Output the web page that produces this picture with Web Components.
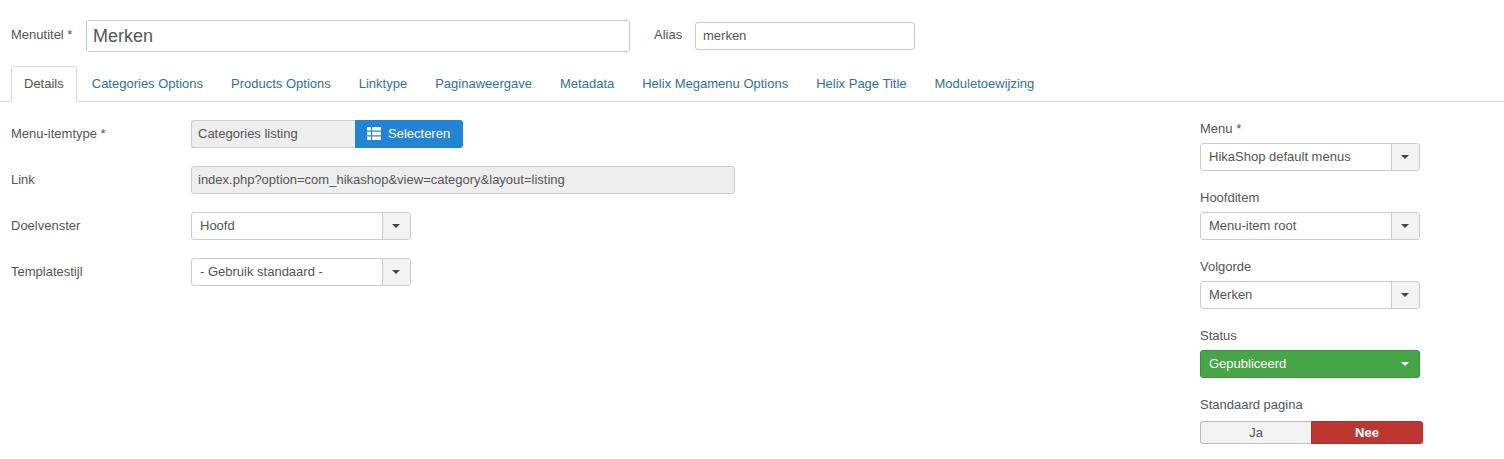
<!DOCTYPE html>
<html lang="nl">
<head>
<meta charset="utf-8">
<title>Merken</title>
<style>
html,body{margin:0;background:#fff;}
body{font:13px/18px "Liberation Sans",Arial,sans-serif;color:#555;}
</style>
</head>
<body>
<menu-form></menu-form>

<script>
class TextVeld extends HTMLElement{
    constructor(){
        super()
        this.attachShadow({ mode: "open" })
        this.shadowRoot.innerHTML = `
            <style>
                :host{display:block;box-sizing:border-box;height:28px;padding:0 7px;border:1px solid #ccc;border-radius:3px;
                    background:#fff;color:#555;font-size:13px;line-height:25px;white-space:nowrap;overflow:hidden;}
                :host([groot]){height:32px;padding:0 6px;font-size:18px;line-height:30px;}
                :host([uit]){background:#eee;padding:0 6px;}
            </style>
            <slot></slot>
        `
    }
}
customElements.define("text-veld", TextVeld)

class KeuzeVeld extends HTMLElement{
    constructor(){
        super()
        this.attachShadow({ mode: "open" })
        this.shadowRoot.innerHTML = `
            <style>
                :host{display:flex;box-sizing:border-box;width:220px;height:28px;border:1px solid #ccc;border-radius:3px;
                    background:#fff;color:#555;font-size:13px;line-height:25px;overflow:hidden;}
                .waarde{flex:1;padding:0 8px;white-space:nowrap;}
                .pijl{box-sizing:border-box;width:28px;padding-right:1px;display:flex;align-items:center;justify-content:center;background:#f3f3f3;border-left:1px solid #ccc;}
                .pijl i{width:0;height:0;border:4px solid transparent;border-top-color:#444;border-bottom:0;}
                :host([status]){background:#46a546;border-color:#3d8f3d;color:#fff;}
                :host([status]) .pijl{background:none;border:0;}
                :host([status]) .pijl i{border-top-color:#fff;}
            </style>
            <span class="waarde"><slot></slot></span>
            <span class="pijl"><i></i></span>
        `
    }
}
customElements.define("keuze-veld", KeuzeVeld)

class FormRij extends HTMLElement{
    constructor(){
        super()
        this.attachShadow({ mode: "open" })
        this.shadowRoot.innerHTML = `
            <style>
                :host{display:flex;align-items:center;height:28px;margin-bottom:18px;}
                .label{width:180px;flex:none;color:#555;}
            </style>
            <span class="label"><slot name="label"></slot></span>
            <slot></slot>
        `
    }
}
customElements.define("form-rij", FormRij)

class ZijVeld extends HTMLElement{
    constructor(){
        super()
        this.attachShadow({ mode: "open" })
        this.shadowRoot.innerHTML = `
            <style>
                :host{display:block;margin-bottom:18px;}
                .label{display:block;height:23px;line-height:18px;color:#555;}
            </style>
            <span class="label"><slot name="label"></slot></span>
            <slot></slot>
        `
    }
}
customElements.define("zij-veld", ZijVeld)

class TabBalk extends HTMLElement{
    constructor(){
        super()
        this.attachShadow({ mode: "open" })
        const namen = ["Details","Categories Options","Products Options","Linktype","Paginaweergave","Metadata","Helix Megamenu Options","Helix Page Title","Moduletoewijzing"]
        this.shadowRoot.innerHTML = `
            <style>
                :host{display:flex;height:35px;padding-left:11px;border-bottom:1px solid #ddd;font-size:13px;line-height:35px;}
                a{padding:0 14px;color:#336fa3;text-decoration:none;white-space:nowrap;}
                a.actief{height:35px;line-height:34px;margin-right:1px;padding:0 12px;color:#555;background:#fff;
                    border:1px solid #ddd;border-bottom:0;border-radius:3px 3px 0 0;}
            </style>
            ${namen.map((n,i)=>`<a href="#" class="${i==0?"actief":""}">${n}</a>`).join("")}
        `
    }
}
customElements.define("tab-balk", TabBalk)

class MenuForm extends HTMLElement{
    constructor(){
        super()
        this.attachShadow({ mode: "open" })
        this.shadowRoot.innerHTML = `
            <style>
                :host{display:block;width:1504px;height:459px;overflow:hidden;}
                .kop{display:flex;align-items:center;height:32px;padding:20px 0 14px 11px;}
                .kop .l{color:#555;margin-bottom:3px;}
                .kop .m{width:75px;}
                .kop .a{width:41px;}
                .titel{width:544px;margin-right:24px;}
                .alias{width:220px;}
                .hoofd{display:flex;justify-content:space-between;padding:18px 84px 0 11px;}
                .kies{display:flex;}
                .kies text-veld{width:164px;border-right:0;border-radius:3px 0 0 3px;}
                .knop{display:flex;align-items:center;gap:7px;box-sizing:border-box;width:108px;height:28px;padding:0 0 1px 12px;
                    background:#2384d3;border-radius:0 3px 3px 0;color:#fff;}
                .link{width:544px;}
                .zij{width:220px;}
                .jn{display:flex;width:223px;height:23px;margin-top:2px;line-height:21px;text-align:center;}
                .jn span{box-sizing:border-box;flex:1;border:1px solid #bbb;}
                .jn .ja{background:#f3f3f3;color:#555;border-radius:3px 0 0 3px;border-right:0;}
                .jn .nee{background:#bd362f;border-color:#a9302a;color:#fff;font-weight:bold;border-radius:0 3px 3px 0;}
            </style>
            <div class="kop">
                <span class="l m">Menutitel *</span>
                <text-veld class="titel" groot>Merken</text-veld>
                <span class="l a">Alias</span>
                <text-veld class="alias">merken</text-veld>
            </div>
            <tab-balk></tab-balk>
            <div class="hoofd">
                <div>
                    <form-rij><span slot="label">Menu-itemtype *</span>
                        <div class="kies">
                            <text-veld uit>Categories listing</text-veld>
                            <div class="knop">
                                <svg width="14" height="13" viewBox="0 0 14 13" fill="#fff">
                                    <rect width="4" height="3.500" y="0"/><rect x="5" width="9" height="3.500" y="0"/>
                                    <rect width="4" height="3.500" y="4.750"/><rect x="5" width="9" height="3.500" y="4.750"/>
                                    <rect width="4" height="3.500" y="9.500"/><rect x="5" width="9" height="3.500" y="9.500"/>
                                </svg>
                                Selecteren
                            </div>
                        </div>
                    </form-rij>
                    <form-rij><span slot="label">Link</span>
                        <text-veld class="link" uit>index.php?option=com_hikashop&amp;view=category&amp;layout=listing</text-veld>
                    </form-rij>
                    <form-rij><span slot="label">Doelvenster</span><keuze-veld>Hoofd</keuze-veld></form-rij>
                    <form-rij><span slot="label">Templatestijl</span><keuze-veld>- Gebruik standaard -</keuze-veld></form-rij>
                </div>
                <div class="zij">
                    <zij-veld><span slot="label">Menu *</span><keuze-veld>HikaShop default menus</keuze-veld></zij-veld>
                    <zij-veld><span slot="label">Hoofditem</span><keuze-veld>Menu-item root</keuze-veld></zij-veld>
                    <zij-veld><span slot="label">Volgorde</span><keuze-veld>Merken</keuze-veld></zij-veld>
                    <zij-veld><span slot="label">Status</span><keuze-veld status>Gepubliceerd</keuze-veld></zij-veld>
                    <zij-veld><span slot="label">Standaard pagina</span>
                        <div class="jn"><span class="ja">Ja</span><span class="nee">Nee</span></div>
                    </zij-veld>
                </div>
            </div>
        `
    }
}
customElements.define("menu-form", MenuForm)
</script>
</body>
</html>
